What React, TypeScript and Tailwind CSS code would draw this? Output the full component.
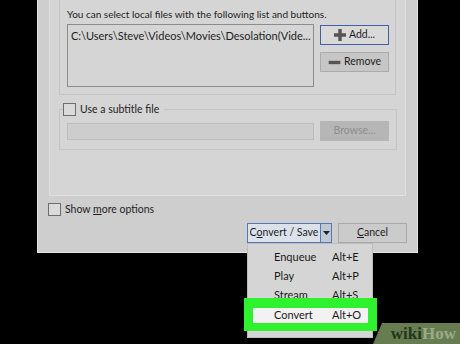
import React from 'react';

const font = { fontFamily: 'Lato, "Liberation Sans", Arial, sans-serif' };

const Check = () => <span className="block shrink-0 w-[13px] h-[13px] border border-[#6e6e6e] bg-[#dadada]" />;

const MenuItem = ({ label, keys }: { label: string; keys: string }) => (
  <div className="flex items-center h-[19px] pl-[26px] text-[11px] text-[#1a1a1a] whitespace-nowrap">
    <span className="w-[58px]">{label}</span>
    <span>{keys}</span>
  </div>
);

export default function App() {
  return (
    <div className="relative w-[460px] h-[344px] bg-black overflow-hidden" style={font}>
      {/* dialog */}
      <div className="ml-[37px] w-[381px] h-[253px] bg-[#cecece] border-l border-r border-b border-[#e6e6e6] flex flex-col">
        {/* inner panel */}
        <div className="ml-[11px] w-[357px] h-[196px] shrink-0 border-l border-r border-b border-[#e0e0e0] bg-[#d5d5d5] px-[9px] flex flex-col">
          {/* file group */}
          <div className="h-[95px] shrink-0 border-l border-r border-b border-[#c4c4c4] px-[7px] pt-[5px]">
            <p className="text-[10px] leading-[18px] text-[#1e1e1e] whitespace-nowrap">You can select local files with the following list and buttons.</p>
            <div className="flex gap-[6px] mt-[1px]">
              <div className="w-[247px] h-[63px] shrink-0 border border-[#8c8c8c] px-[3px] py-[2px] text-[11px] leading-[18px] text-[#1e1e1e] whitespace-nowrap overflow-hidden">
                C:\Users\Steve\Videos\Movies\Desolation(Vide...
              </div>
              <div className="flex flex-col gap-[7px] pt-[1px]">
                <button className="w-[69px] h-[20px] bg-[#d9d9d9] border border-[#3f5fa8] flex items-center justify-center gap-[3px] text-[10.5px] text-[#1e1e1e]">
                  <svg width="12" height="12" viewBox="0 0 14 14"><path d="M5 0h4v5h5v4H9v5H5V9H0V5h5z" fill="#555" /></svg>
                  Add...
                </button>
                <button className="w-[69px] h-[20px] bg-[#c6c6c6] border border-[#ababab] flex items-center justify-center gap-[3px] text-[10.5px] text-[#1e1e1e]">
                  <svg width="13" height="5" viewBox="0 0 14 6"><rect x="0" y="1" width="14" height="4" fill="#555" /></svg>
                  Remove
                </button>
              </div>
            </div>
          </div>
          {/* subtitle group */}
          <fieldset className="mt-[7px] h-[48px] border border-[#c4c4c4] px-[7px] pb-0">
            <legend className="flex items-center gap-[4px] px-0 ml-[-4px] pr-[5px] text-[10.5px] text-[#1e1e1e] leading-[14px]">
              <Check />
              <span>Use a subtitle file</span>
            </legend>
            <div className="flex gap-[6px] items-center mt-[5px]">
              <div className="w-[247px] h-[17px] shrink-0 bg-[#cdcdcd] border border-[#bdbdbd]" />
              <div className="w-[69px] h-[20px] bg-[#b6b6b6] flex items-center justify-center text-[10.5px] text-[#8e8e8e]">Browse...</div>
            </div>
          </fieldset>
        </div>
        {/* show more */}
        <div className="mt-[7px] ml-[10px] flex items-center h-[13px]">
          <Check />
          <span className="ml-[4px] text-[10.5px] text-[#1e1e1e]">Show <span className="underline">m</span>ore options</span>
        </div>
        {/* buttons */}
        <div className="mt-[7px] flex justify-end pr-[10px] gap-[6px]">
          <div className="w-[85px] h-[20px] border border-[#5777b3] bg-[#dbe2ec] flex">
            <span className="flex-1 flex items-center justify-center text-[10.5px] text-[#1e1e1e] whitespace-nowrap">C<span className="underline">o</span>nvert / Save</span>
            <span className="w-[11px] border-l border-[#5777b3] bg-[#bfc8d5] flex items-center justify-center">
              <svg width="7" height="4" viewBox="0 0 7 4"><path d="M0 0h7L3.5 4z" fill="#222" /></svg>
            </span>
          </div>
          <div className="w-[69px] h-[20px] border border-[#a9a9a9] bg-[#cbcbcb] flex items-center justify-center text-[10.5px] text-[#1e1e1e]">
            <span className="underline">C</span>ancel
          </div>
        </div>
      </div>

      {/* dropdown menu */}
      <div className="absolute left-[247px] top-[243px] w-[126px] h-[95px] bg-[#d5d5d5] border border-[#bdbdbd] pt-[4px]">
        <MenuItem label="Enqueue" keys="Alt+E" />
        <MenuItem label="Play" keys="Alt+P" />
        <MenuItem label="Stream" keys="Alt+S" />
        <MenuItem label="Convert" keys="Alt+O" />
      </div>

      {/* highlight */}
      <div className="absolute left-[244px] top-[298px] w-[133px] h-[33px] bg-[#2ef22e] pl-[9px] pt-[10px]">
        <div className="w-[115px] h-[15px] bg-[#f2f2f2] flex items-center pl-[21px] text-[11px] text-[#1a1a1a] whitespace-nowrap">
          <span className="w-[58px]">Convert</span>
          <span>Alt+O</span>
        </div>
      </div>

      {/* watermark */}
      <div className="absolute right-0 bottom-0 w-[87px] h-[21px] bg-[#687c52] [clip-path:polygon(9px_0,100%_0,100%_100%,0_100%)] flex items-center justify-end pr-[4px]">
        <span className="text-[17px] font-bold leading-none" style={{ fontFamily: '"Liberation Serif", serif' }}>
          <span className="text-[#24361a]">wiki</span><span className="text-[#9aac86]">How</span>
        </span>
      </div>
    </div>
  );
}
